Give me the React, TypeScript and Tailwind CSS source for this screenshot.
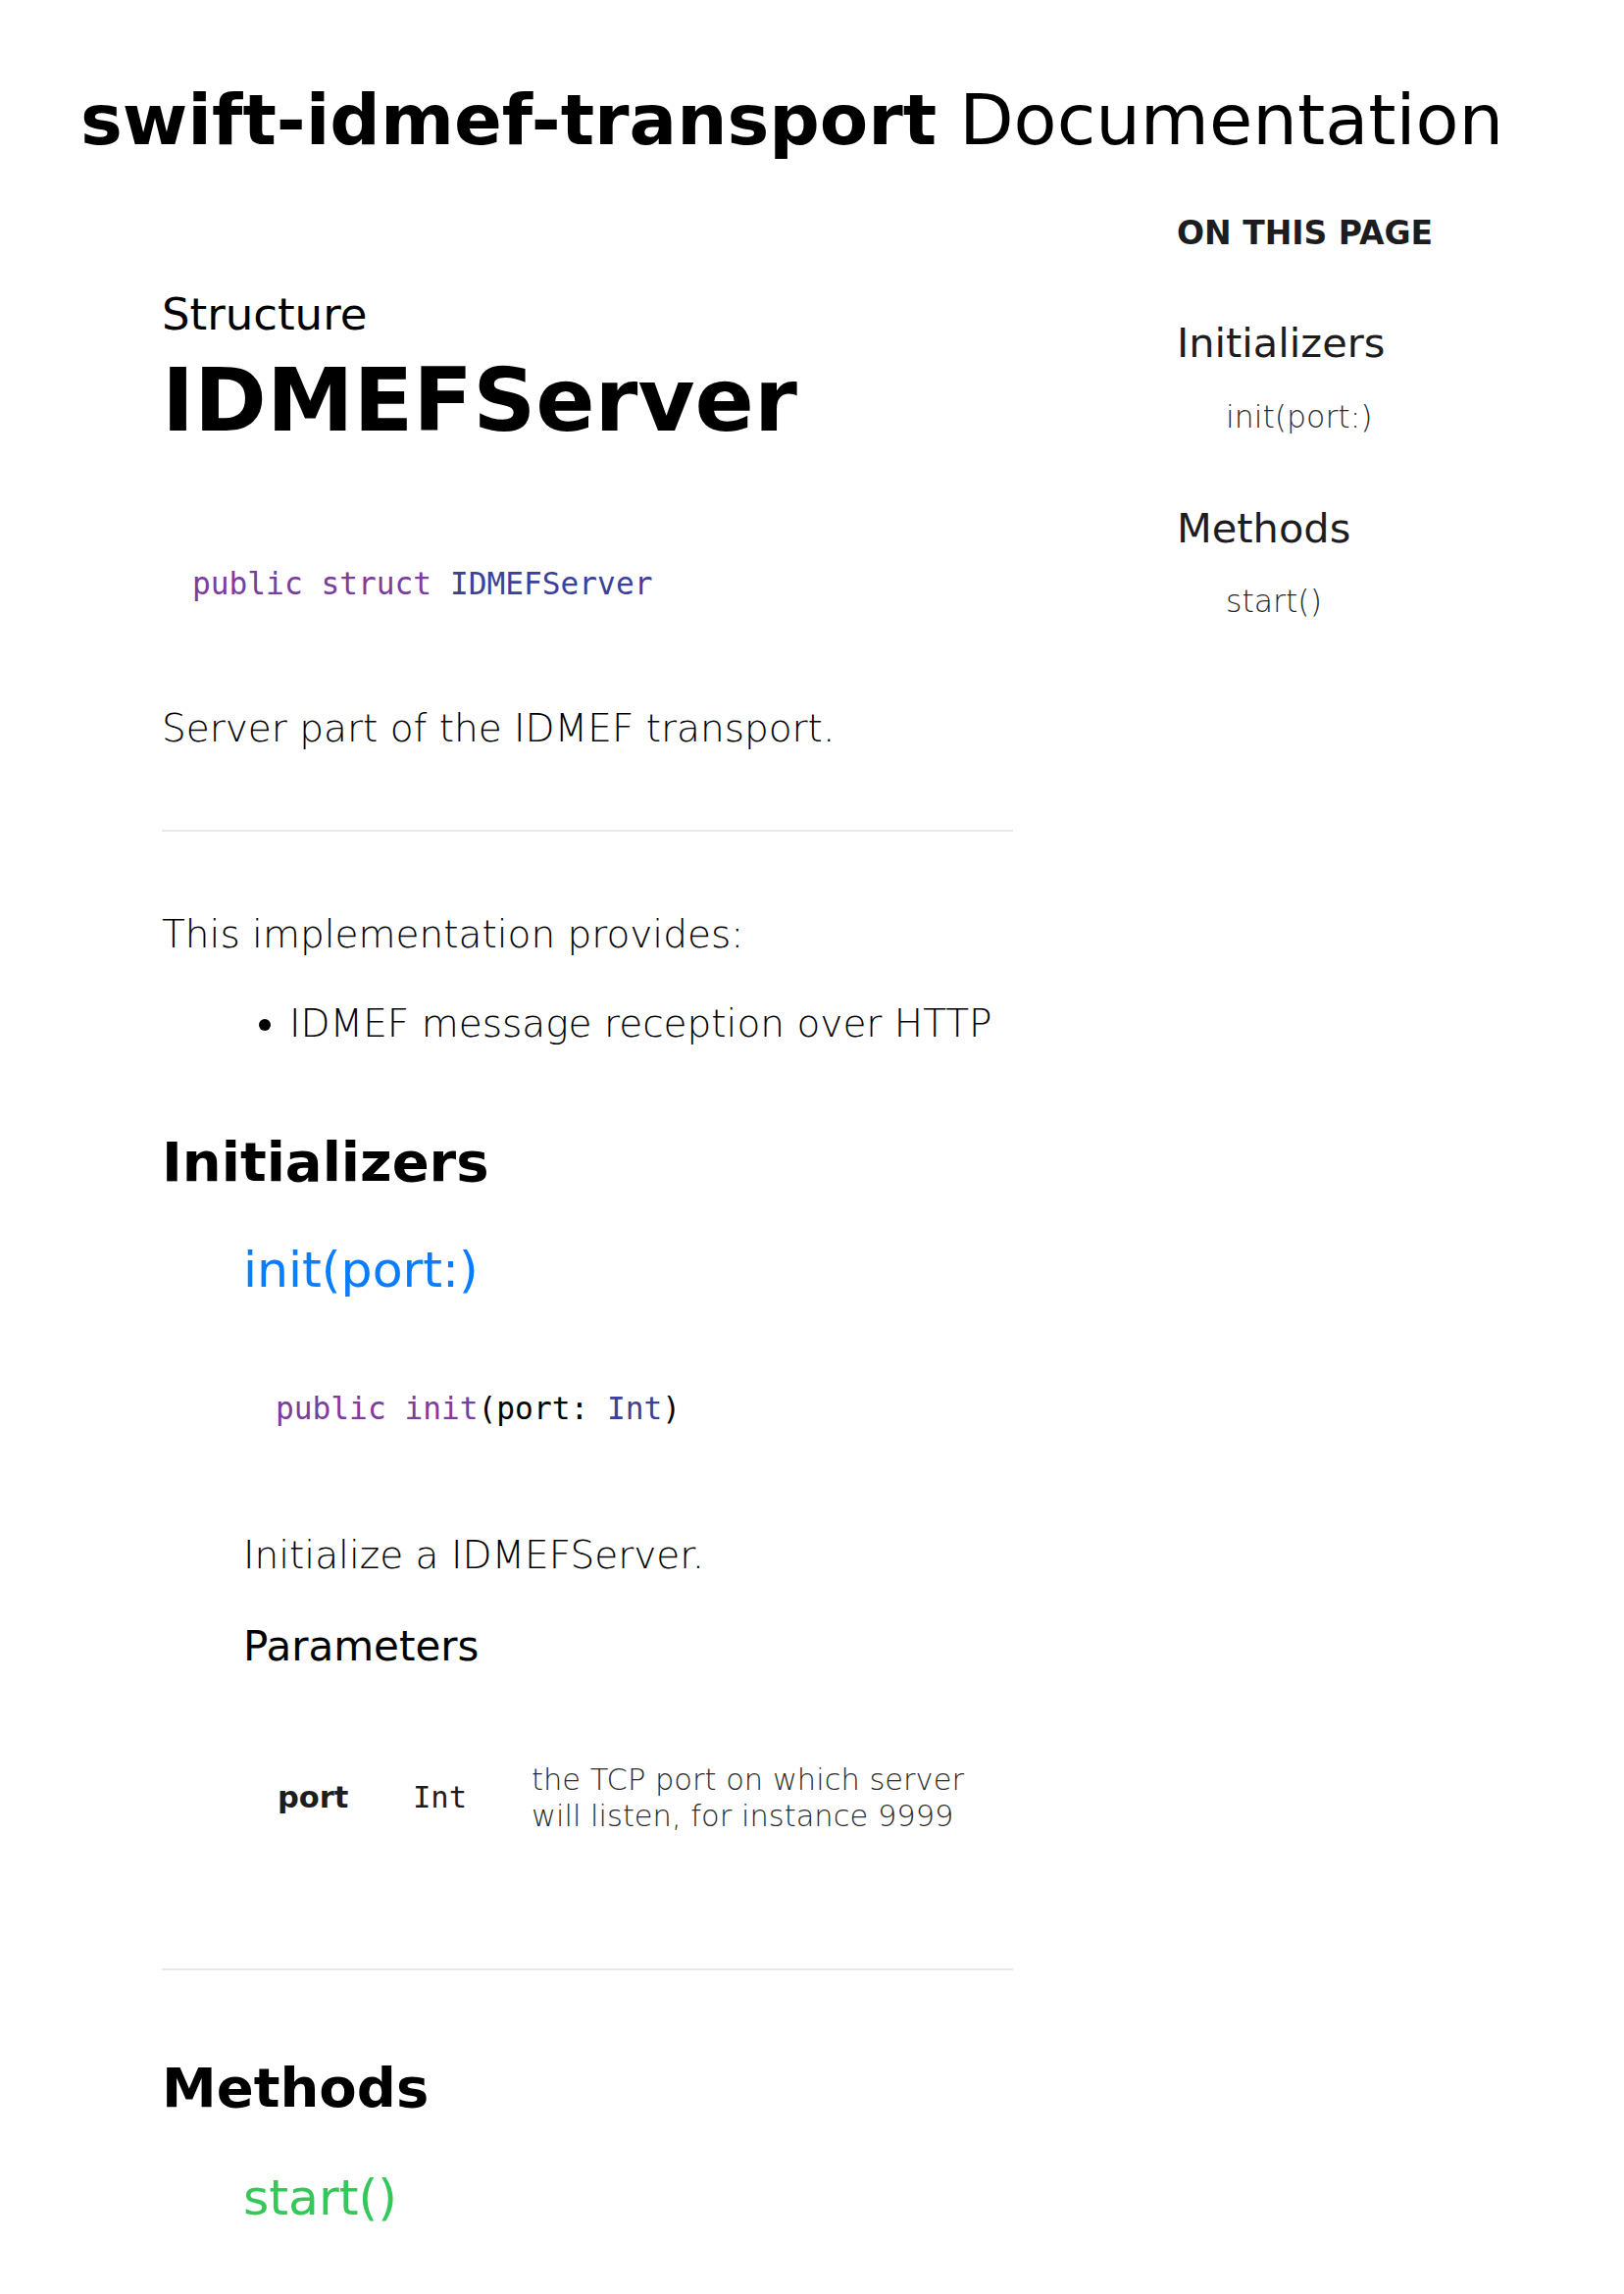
import React from 'react'

const Kw = ({ children }: { children: React.ReactNode }) => (
	<span className="text-[#7b3d9e]">{children}</span>
)
const Ty = ({ children }: { children: React.ReactNode }) => (
	<span className="text-[#3d3f9b]">{children}</span>
)

const Sidebar = () => (
	<aside className="ml-[167px] mt-[63px] text-[#1d1d1f]">
		<h2 className="text-[33px] leading-[33px] font-bold uppercase">On this page</h2>
		<div className="mt-[75px] text-[41.5px] leading-[41.5px]">Initializers</div>
		<div className="mt-[39px] pl-[50px] text-[31.5px] leading-[31.5px] font-extralight text-[#2a2a2a]">init(port:)</div>
		<div className="mt-[77px] text-[41.5px] leading-[41.5px]">Methods</div>
		<div className="mt-[38px] pl-[50px] text-[31.5px] leading-[31.5px] font-extralight text-[#2a2a2a]">start()</div>
	</aside>
)

export default function App() {
	return (
		<div className="w-[1656px] min-h-[2339px] bg-white text-black font-['DejaVu_Sans',sans-serif]">
			<header className="pl-[82px] pt-[86px]">
				<h1 className="text-[72px] leading-[72px] whitespace-nowrap">
					<span className="font-bold">swift-idmef-transport</span> Documentation
				</h1>
			</header>

			<div className="flex items-start">
				<main className="ml-[165px] w-[868px] mt-[140px]">
					<div className="text-[45px] leading-[45px]">Structure</div>
					<h1 className="mt-[21px] text-[89px] leading-[89px] font-bold">IDMEFServer</h1>

					<pre className="mt-[127px] pl-[31px] text-[31.2px] leading-[31.2px] font-['DejaVu_Sans_Mono',monospace]">
						<Kw>public</Kw> <Kw>struct</Kw> <Ty>IDMEFServer</Ty>
					</pre>

					<p className="mt-[112px] text-[39px] leading-[39px] font-extralight">Server part of the IDMEF transport.</p>

					<hr className="mt-[84px] border-0 h-[2px] bg-[#e8e8ed]" />

					<p className="mt-[85px] text-[39px] leading-[39px] font-extralight">This implementation provides:</p>
					<ul className="mt-[52px] list-disc pl-[130px] text-[39px] leading-[39px] font-extralight">
						<li>IDMEF message reception over HTTP</li>
					</ul>

					<section>
						<h2 className="mt-[94px] text-[56px] leading-[56px] font-bold">Initializers</h2>
						<div className="pl-[83px]">
							<h3 className="mt-[57px] text-[50.5px] leading-[50.5px] text-[#0a7cff]">init(port:)</h3>
							<pre className="mt-[100px] pl-[33px] text-[31.2px] leading-[31.2px] font-['DejaVu_Sans_Mono',monospace]">
								<Kw>public</Kw> <Kw>init</Kw>(port: <Ty>Int</Ty>)
							</pre>
							<p className="mt-[114px] text-[39px] leading-[39px] font-extralight">Initialize a IDMEFServer.</p>
							<h4 className="mt-[53px] text-[42px] leading-[42px]">Parameters</h4>
							<table className="mt-[96px] border-collapse">
								<tbody>
									<tr className="align-middle">
										<td className="pl-[35px] pr-0 w-[173px] text-[30.5px] leading-[37px] font-bold text-[#1d1d1f]">port</td>
										<td className="w-[121px] text-[30.5px] leading-[37px] font-['DejaVu_Sans_Mono',monospace] text-[#1d1d1f]">Int</td>
										<td className="w-[478px] text-[30.5px] leading-[37px] font-extralight text-[#2a2a2a]">
											the TCP port on which server will listen, for instance 9999
										</td>
									</tr>
								</tbody>
							</table>
						</div>
					</section>

					<hr className="mt-[137px] border-0 h-[2px] bg-[#e8e8ed]" />

					<section>
						<h2 className="mt-[92px] text-[56px] leading-[56px] font-bold">Methods</h2>
						<div className="pl-[83px]">
							<h3 className="mt-[59px] text-[50.5px] leading-[50.5px] text-[#34c759]">start()</h3>
						</div>
					</section>
				</main>

				<Sidebar />
			</div>
		</div>
	)
}
